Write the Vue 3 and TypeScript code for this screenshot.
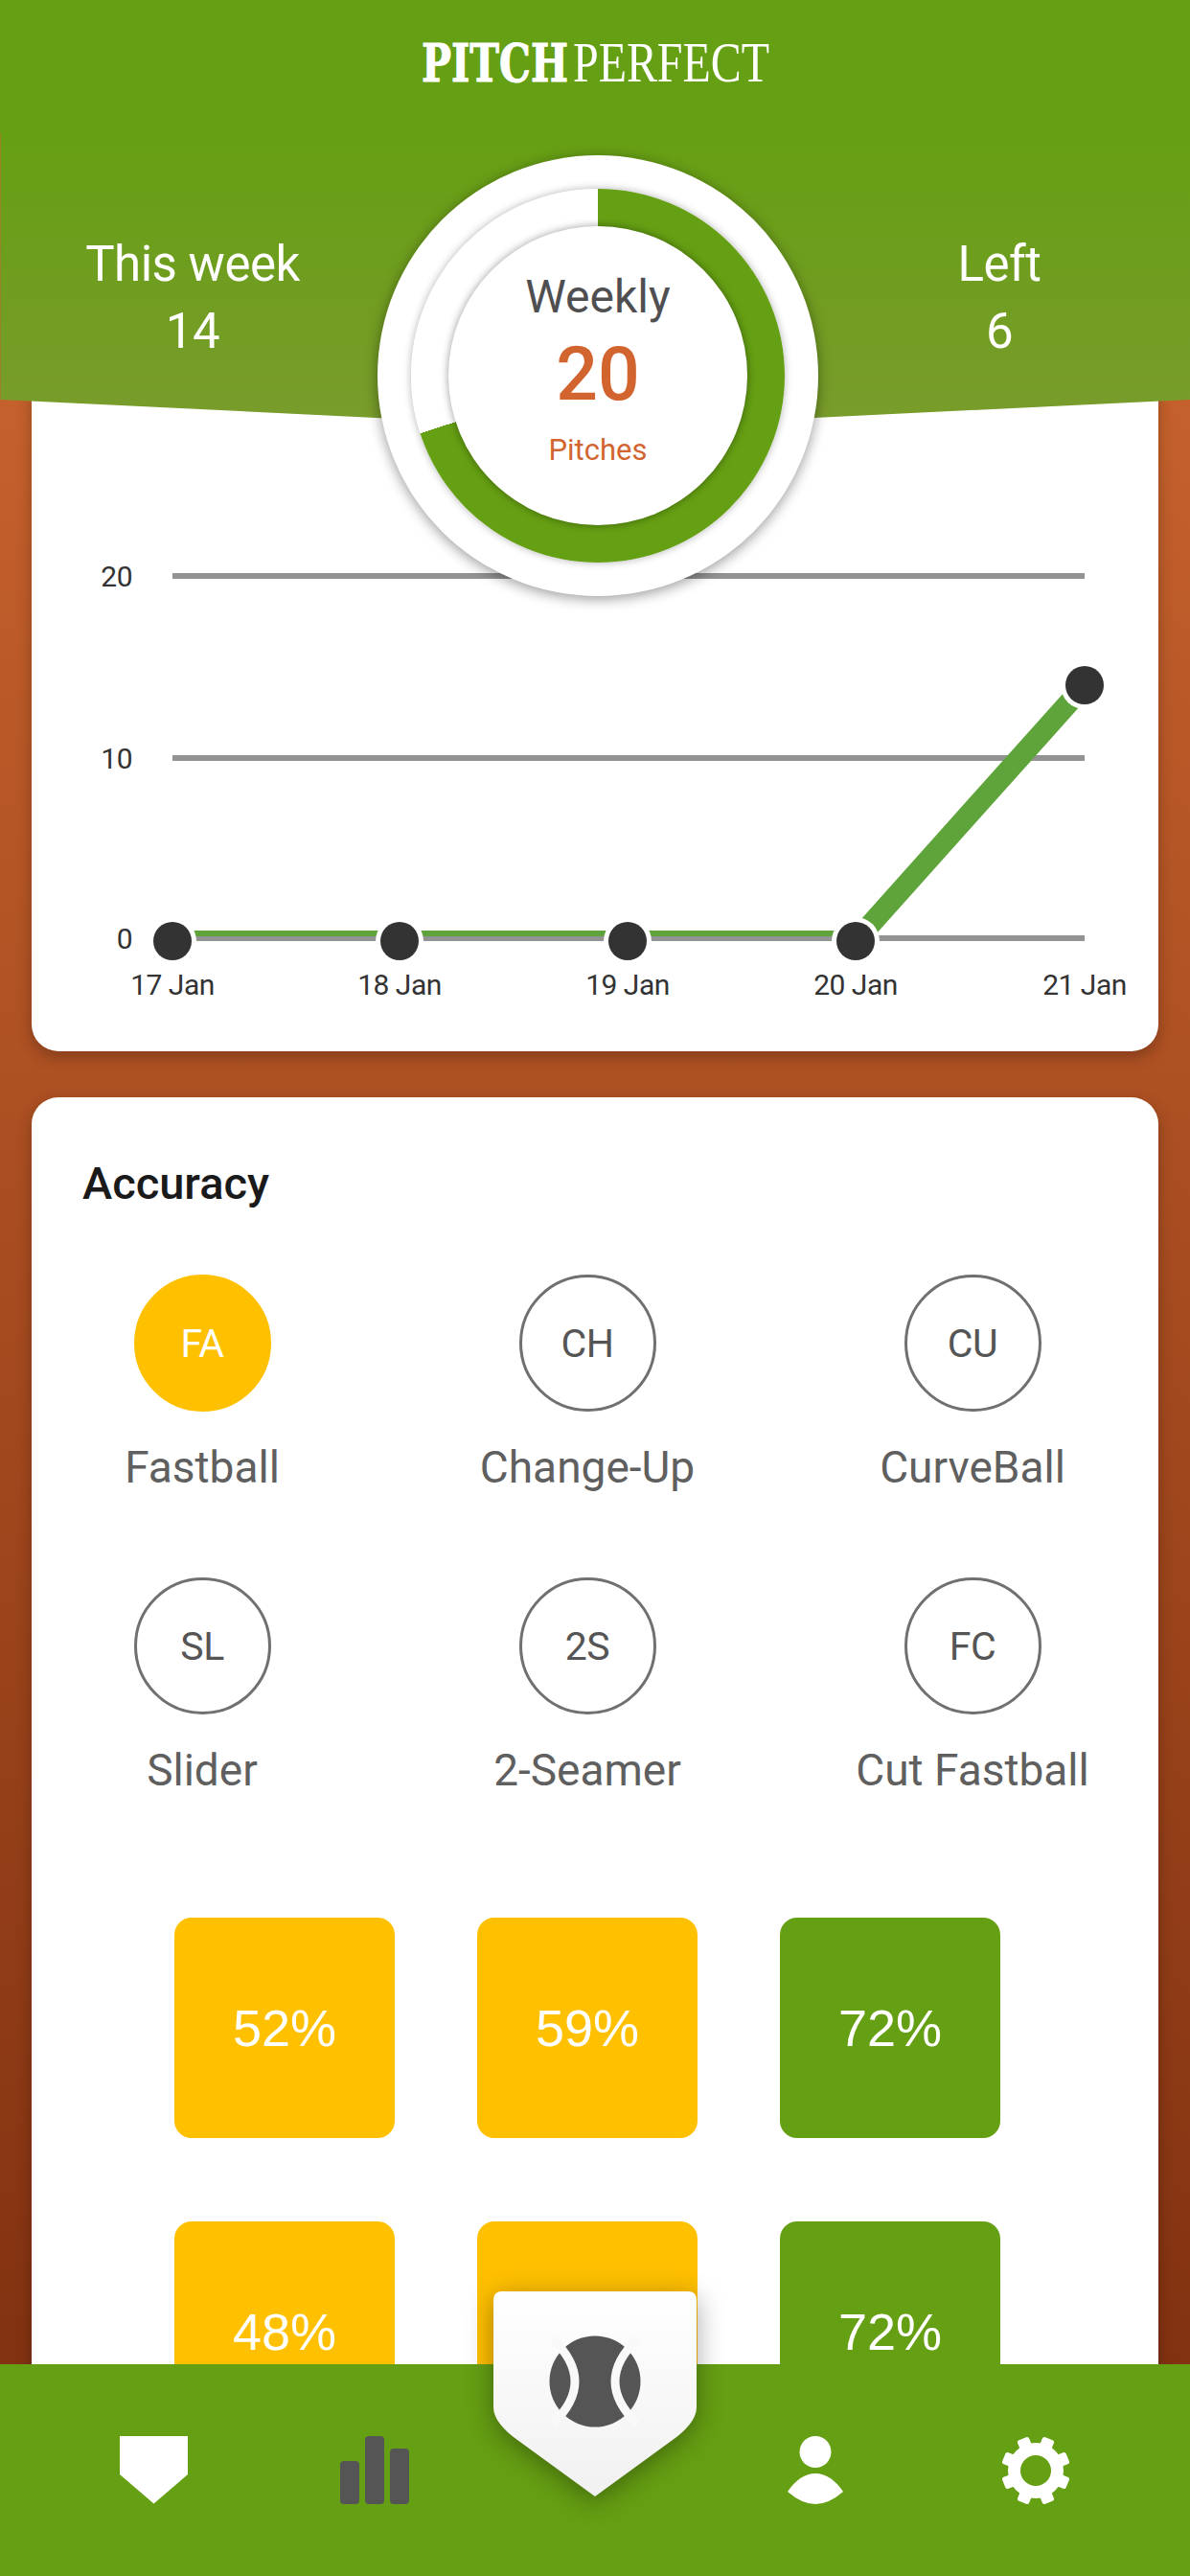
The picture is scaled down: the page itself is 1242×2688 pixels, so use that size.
<template>
  <div class="phone">
    <main class="content">
      <section class="card chart-card">
        <svg class="chart" viewBox="33 380 1176 717" width="1176" height="717">
          <defs>
            <clipPath id="plot-clip"><rect x="100" y="600" width="1100" height="377" /></clipPath>
          </defs>
          <g v-for="g in gridLines" :key="g.label">
            <line x1="180" x2="1132" :y1="g.y" :y2="g.y" class="grid-line" />
            <text x="138" :y="g.y + 11" text-anchor="end" class="axis-text">{{ g.label }}</text>
          </g>
          <polyline :points="linePoints" class="data-line" clip-path="url(#plot-clip)" />
          <g v-for="p in points" :key="p.label">
            <circle :cx="p.x" :cy="p.y" r="25" fill="#fff" />
            <circle :cx="p.x" :cy="p.y" r="20" fill="#333" />
            <text :x="p.x" y="1038" text-anchor="middle" class="axis-text">{{ p.label }}</text>
          </g>
        </svg>
      </section>

      <section class="card accuracy-card">
        <h2 class="accuracy-title">Accuracy</h2>
        <div class="pitch-grid">
          <div v-for="(p, i) in pitches" :key="p.code" class="pitch">
            <div class="pitch-circle" :class="{ active: i === 0 }">{{ p.code }}</div>
            <div class="pitch-name">{{ p.name }}</div>
          </div>
        </div>
        <div class="tile-grid">
          <div v-for="(t, i) in tiles" :key="i" class="tile" :class="t >= 70 ? 'good' : 'ok'">{{ t }}%</div>
        </div>
      </section>
    </main>

    <header class="top">
      <div class="top-bg"></div>
      <svg class="logo" width="372" height="66" viewBox="0 0 372 66">
        <text y="48"><tspan x="0" textLength="153" lengthAdjust="spacingAndGlyphs" class="logo-bold">PITCH</tspan><tspan x="158" textLength="205" lengthAdjust="spacingAndGlyphs" class="logo-thin">PERFECT</tspan></text>
      </svg>
      <div class="stats">
        <div class="stat stat-left">
          <div>This week</div>
          <div>{{ done }}</div>
        </div>
        <div class="ring-outer">
          <div class="ring-track" :style="{ background: ringFill }">
            <div class="ring-core">
              <div class="ring-label">Weekly</div>
              <div class="ring-value">{{ goal }}</div>
              <div class="ring-unit">Pitches</div>
            </div>
          </div>
        </div>
        <div class="stat stat-right">
          <div>Left</div>
          <div>{{ goal - done }}</div>
        </div>
      </div>
    </header>

    <nav class="bottom">
      <div class="nav-item">
        <svg width="72" height="71" viewBox="0 0 72 71"><path d="M0 0H71V40L35.500 70.500L0 40Z" fill="#fff" /></svg>
      </div>
      <div class="nav-item">
        <svg width="73" height="71" viewBox="0 0 73 71" fill="#555">
          <rect x="0" y="26" width="20" height="45" rx="4" />
          <rect x="26" y="0" width="20" height="71" rx="4" />
          <rect x="52" y="13" width="20" height="58" rx="4" />
        </svg>
      </div>
      <div class="nav-item nav-center">
        <svg class="shield" width="214" height="216" viewBox="0 0 214 216">
          <defs>
            <linearGradient id="shield-fill" x1="0" y1="0" x2="0" y2="1">
              <stop offset="0" stop-color="#ffffff" />
              <stop offset="1" stop-color="#f1f1f1" />
            </linearGradient>
          </defs>
          <path d="M10 1H204Q213 1 213 10V122C213 134 202 146 188 156L107 215L26 156C12 146 1 134 1 122V10Q1 1 10 1Z" fill="url(#shield-fill)" />
        </svg>
        <svg class="ball" width="96" height="96" viewBox="0 0 96 96">
          <circle cx="48" cy="48" r="47.500" fill="#555" />
          <path d="M4 4Q50 48 4 92M92 4Q46 48 92 92" fill="none" stroke="#f9f9f9" stroke-width="9" />
        </svg>
      </div>
      <div class="nav-item">
        <svg width="60" height="71" viewBox="0 0 60 71" fill="#fff">
          <circle cx="30" cy="16.500" r="16.500" />
          <path d="M1 58Q14 39 30 39T59 58Q44 71 30 71T1 58Z" />
        </svg>
      </div>
      <div class="nav-item">
        <svg width="72" height="72" viewBox="-36 -36 72 72">
          <circle r="22.500" fill="none" stroke="#fff" stroke-width="13" />
          <rect
            v-for="a in gearAngles"
            :key="a"
            x="-6.500"
            y="-36"
            width="13"
            height="12"
            rx="2.500"
            fill="#fff"
            :transform="`rotate(${a})`"
          />
        </svg>
      </div>
    </nav>
  </div>
</template>

<script setup lang="ts">
import { computed } from 'vue';

const done = 14;
const goal = 20;

// 14 of 20 drawn clockwise from the top
const ringFill = computed(() => {
  const deg = (done / goal) * 360;
  return `conic-gradient(#659f13 0deg ${deg}deg, #fff ${deg}deg 360deg)`;
});

const gridLines = [
  { label: '20', y: 601 },
  { label: '10', y: 791 },
  { label: '0', y: 979 },
];

const points = [
  { label: '17 Jan', x: 180, y: 982 },
  { label: '18 Jan', x: 417, y: 982 },
  { label: '19 Jan', x: 655, y: 982 },
  { label: '20 Jan', x: 893, y: 982 },
  { label: '21 Jan', x: 1132, y: 715 },
];

// flat part sits under the axis and gets clipped at the plot bottom
const linePoints = '180,982 417,982 655,982 893,982 1132,715';

const pitches = [
  { code: 'FA', name: 'Fastball' },
  { code: 'CH', name: 'Change-Up' },
  { code: 'CU', name: 'CurveBall' },
  { code: 'SL', name: 'Slider' },
  { code: '2S', name: '2-Seamer' },
  { code: 'FC', name: 'Cut Fastball' },
];

const tiles = [52, 59, 72, 48, 59, 72];

const gearAngles = [22.5, 67.5, 112.5, 157.5, 202.5, 247.5, 292.5, 337.5];
</script>

<style>
html, body { margin: 0; padding: 0; }
</style>

<style scoped>
.phone {
  position: relative;
  width: 1242px;
  height: 2688px;
  overflow: hidden;
  background: linear-gradient(#d26a32, #7b2d0e);
  font-family: Roboto, "Liberation Sans", sans-serif;
}

.content {
  display: flex;
  flex-direction: column;
  gap: 48px;
  padding: 380px 33px 0;
}

.card {
  background: #fff;
  border-radius: 28px;
  box-shadow: 0 6px 16px rgba(0, 0, 0, 0.25);
}

.chart-card { height: 717px; }
.chart { display: block; }

.grid-line { stroke: #939393; stroke-width: 6; }
.data-line { fill: none; stroke: #5fa43a; stroke-width: 22; }
.axis-text { font-size: 30px; letter-spacing: -0.5px; fill: #333; }

.accuracy-card { padding-bottom: 200px; }

.accuracy-title {
  margin: 0;
  padding: 60px 0 0 53px;
  height: 70px;
  font-size: 47px;
  line-height: 60px;
  font-weight: 500;
  color: #1a1a1a;
}

.pitch-grid {
  display: grid;
  grid-template-columns: repeat(3, 300px);
  column-gap: 102px;
  row-gap: 85px;
  padding: 55px 0 0 28px;
}

.pitch {
  display: flex;
  flex-direction: column;
  align-items: center;
  gap: 28px;
}

.pitch-circle {
  display: flex;
  align-items: center;
  justify-content: center;
  box-sizing: border-box;
  width: 143px;
  height: 143px;
  border: 3px solid #707070;
  border-radius: 50%;
  font-size: 41px;
  letter-spacing: -0.5px;
  color: #555;
}

.pitch-circle.active {
  background: #ffc000;
  border-color: #ffc000;
  color: #fff;
}

.pitch-name {
  font-size: 46px;
  line-height: 60px;
  color: #5f5f5f;
  white-space: nowrap;
}

.tile-grid {
  display: grid;
  grid-template-columns: repeat(3, 230px);
  column-gap: 86px;
  row-gap: 87px;
  padding: 124px 0 0 149px;
}

.tile {
  display: flex;
  align-items: center;
  justify-content: center;
  height: 230px;
  border-radius: 18px;
  font-family: "Liberation Sans", Arial, sans-serif;
  font-size: 54px;
  color: #fff;
}

.tile.ok { background: #ffc000; }
.tile.good { background: #659f13; }

.top {
  position: absolute;
  top: 0;
  left: 0;
  width: 100%;
}

.top-bg {
  position: absolute;
  top: 0;
  left: 0;
  width: 100%;
  height: 450px;
  background: linear-gradient(#659f13 30%, #7a9c2c);
  clip-path: polygon(0 0, 100% 0, 100% 417px, 50% 447px, 0.5px 417px, 0.5px 139px, 0 139px);
}

.logo {
  position: relative;
  display: block;
  margin: 37px 0 0 440px;
}

.logo-bold {
  font-family: "DejaVu Serif", serif;
  font-weight: 700;
  font-size: 54px;
  fill: #fff;
  stroke: #fff;
  stroke-width: 1px;
}

.logo-thin {
  font-family: "Liberation Serif", serif;
  font-size: 60px;
  fill: #fff;
}

.stats {
  position: relative;
  display: grid;
  grid-template-columns: 394px 460px 388px;
  margin-top: 59px;
}

.stat {
  padding-top: 84px;
  display: flex;
  flex-direction: column;
  gap: 10px;
  text-align: center;
  font-size: 51px;
  letter-spacing: -0.5px;
  line-height: 60px;
  color: #fff;
}

.stat-left { padding-left: 8px; }
.stat-right { padding-right: 10px; }

.ring-outer {
  display: flex;
  align-items: center;
  justify-content: center;
  width: 460px;
  height: 460px;
  border-radius: 50%;
  background: #fff;
  box-shadow: 0 3px 14px rgba(0, 0, 0, 0.4);
}

.ring-track {
  display: flex;
  align-items: center;
  justify-content: center;
  width: 390px;
  height: 390px;
  border-radius: 50%;
  box-shadow: 0 0 8px rgba(0, 0, 0, 0.3);
}

.ring-core {
  display: flex;
  flex-direction: column;
  align-items: center;
  width: 312px;
  height: 312px;
  border-radius: 50%;
  background: #fff;
  box-shadow: 0 0 8px rgba(0, 0, 0, 0.4);
}

.ring-label {
  margin-top: 44px;
  font-size: 48px;
  line-height: 60px;
  color: #4f4f52;
}

.ring-value {
  margin-top: 11px;
  font-size: 77px;
  line-height: 80px;
  font-weight: 500;
  color: #d2652f;
}

.ring-unit {
  margin-top: 19px;
  font-size: 31px;
  line-height: 40px;
  color: #d2652f;
}

.bottom {
  position: absolute;
  left: 0;
  bottom: 0;
  width: 100%;
  height: 221px;
  box-sizing: border-box;
  padding: 75px 46px 0;
  display: grid;
  grid-template-columns: repeat(5, 230px);
  background: #659f13;
}

.nav-item {
  display: flex;
  justify-content: center;
  align-items: flex-start;
}

.nav-center {
  position: relative;
  margin-top: -152px;
}

.shield {
  filter: drop-shadow(0 6px 14px rgba(0, 0, 0, 0.35));
  overflow: visible;
}

.ball {
  position: absolute;
  top: 47px;
  left: 67px;
}
</style>
